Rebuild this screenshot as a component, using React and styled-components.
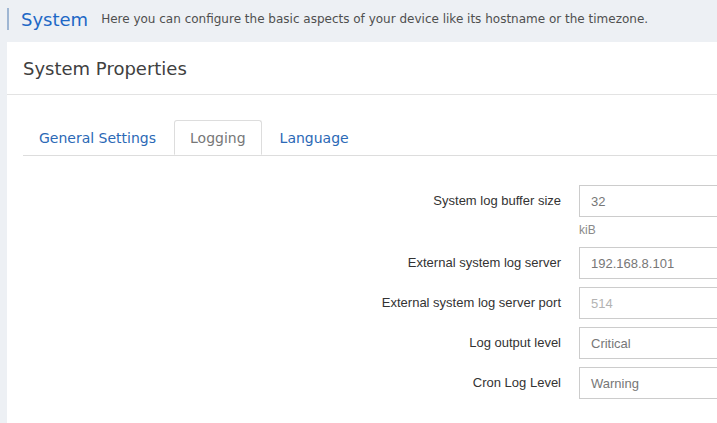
import React from "react";
import styled, { createGlobalStyle } from "styled-components";

const GlobalStyle = createGlobalStyle`
  html, body {
    margin: 0;
    padding: 0;
    background: #edf0f4;
    overflow: hidden;
  }
  body {
    font-family: "DejaVu Sans", Verdana, sans-serif;
  }
`;

const Page = styled.div`
  width: 717px;
  height: 423px;
  overflow: hidden;
`;

const Header = styled.div`
  height: 42px;
  box-sizing: border-box;
  padding: 8px 0 0 7px;
`;

const HeaderTitle = styled.div`
  display: flex;
  align-items: center;
  height: 22px;
  border-left: 2px solid #9fb6d3;
  padding-left: 12px;
  white-space: nowrap;
`;

const PageName = styled.span`
  font-size: 18px;
  color: #1d68c6;
  margin-right: 13px;
`;

const PageDesc = styled.span`
  font-size: 12px;
  color: #4f4f4f;
`;

const Card = styled.div`
  margin-left: 7px;
  width: 760px;
  height: 381px;
  background: #fff;
`;

const CardHead = styled.div`
  height: 53px;
  box-sizing: border-box;
  display: flex;
  align-items: center;
  padding-left: 16px;
  border-bottom: 1px solid #e3e3e3;
  font-size: 18px;
  color: #404040;
`;

const TabBar = styled.ul`
  list-style: none;
  display: flex;
  margin: 25px 0 0 16px;
  padding: 0;
  height: 35px;
  border-bottom: 1px solid #dddddd;
`;

const Tab = styled.li`
  margin-right: 2px;
  margin-bottom: -1px;
  padding: 0 15px;
  height: 35px;
  box-sizing: border-box;
  display: flex;
  align-items: center;
  font-size: 14px;
  color: ${(p) => (p.$active ? "#777777" : "#2b69b6")};
  border: 1px solid ${(p) => (p.$active ? "#dddddd" : "transparent")};
  border-bottom-color: ${(p) => (p.$active ? "#fff" : "transparent")};
  border-radius: 3px 3px 0 0;
  background: #fff;
  cursor: pointer;
`;

const Form = styled.div`
  padding-top: 29px;
  font-family: "Liberation Sans", Arial, sans-serif;
`;

const Row = styled.div`
  display: grid;
  grid-template-columns: 554px 300px;
  column-gap: 18px;
  align-items: start;
  margin-bottom: 8px;
`;

const Label = styled.div`
  text-align: right;
  line-height: 32px;
  font-size: 13px;
  color: #333333;
  white-space: nowrap;
`;

const FieldBox = styled.div`
  height: 32px;
  box-sizing: border-box;
  border: 1px solid #cccccc;
  padding-left: 11px;
  display: flex;
  align-items: center;
  font-size: 13px;
  color: ${(p) => (p.$placeholder ? "#b3b3b3" : "#777777")};
`;

const Help = styled.div`
  padding-top: 4px;
  line-height: 18px;
  font-size: 12px;
  color: #8a8a8a;
`;

const fields = [
  { label: "System log buffer size", value: "32", help: "kiB" },
  { label: "External system log server", value: "192.168.8.101" },
  { label: "External system log server port", value: "514", placeholder: true },
  { label: "Log output level", value: "Critical" },
  { label: "Cron Log Level", value: "Warning" },
];

export default function App() {
  return (
    <Page>
      <GlobalStyle />
      <Header>
        <HeaderTitle>
          <PageName>System</PageName>
          <PageDesc>
            Here you can configure the basic aspects of your device like its hostname or the timezone.
          </PageDesc>
        </HeaderTitle>
      </Header>
      <Card>
        <CardHead>System Properties</CardHead>
        <TabBar>
          <Tab>General Settings</Tab>
          <Tab $active>Logging</Tab>
          <Tab>Language</Tab>
        </TabBar>
        <Form>
          {fields.map((f) => (
            <Row key={f.label}>
              <Label>{f.label}</Label>
              <div>
                <FieldBox $placeholder={f.placeholder}>{f.value}</FieldBox>
                {f.help && <Help>{f.help}</Help>}
              </div>
            </Row>
          ))}
        </Form>
      </Card>
    </Page>
  );
}
